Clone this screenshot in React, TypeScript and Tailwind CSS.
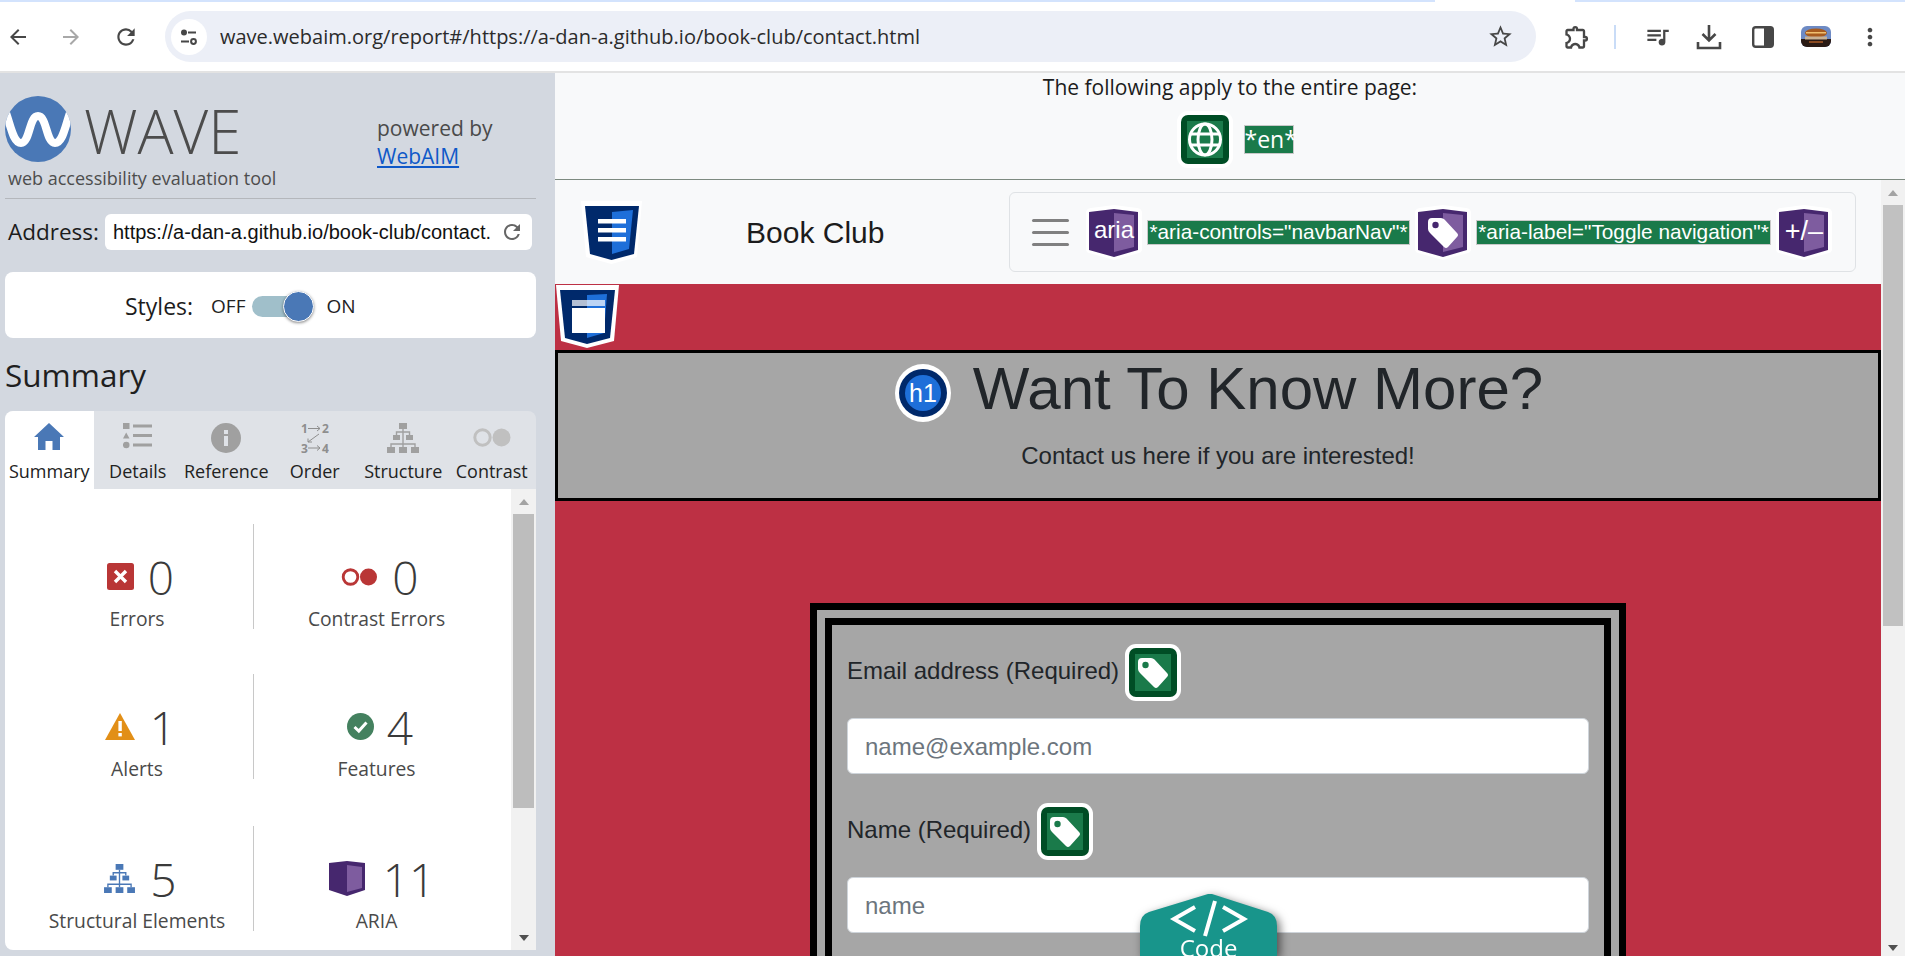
import React from "react";
import {
  MdArrowBack,
  MdArrowForward,
  MdRefresh,
  MdStarBorder,
  MdOutlineExtension,
  MdQueueMusic,
  MdMoreVert,
} from "react-icons/md";

const OPEN = "font-['Open_Sans',sans-serif]";

const TAG = "M13 18 Q13 14 17 14 L26 14 Q28 14 29.5 15.5 L42 29 Q44 31 42 33 L33 43 Q31 45 29 43 L15 29 Q13 27 13 25 Z";

function GreenBox({ kind }: { kind: "tag" | "globe" }) {
  return (
    <svg width="56" height="57" viewBox="0 0 56 57" className="shrink-0">
      <rect x="0" y="0" width="56" height="57" rx="11" fill="#fff" />
      <rect x="4" y="4" width="48" height="49" rx="7" fill="#004d25" />
      <rect x="10" y="10" width="36" height="37" fill="#1a7a4a" />
      {kind === "tag" ? (
        <>
          <path d={TAG} fill="#fff" />
          <circle cx="20.5" cy="21" r="3.2" fill="#1a7a4a" />
        </>
      ) : (
        <g fill="none" stroke="#fff" strokeWidth="3">
          <circle cx="28" cy="28.5" r="15.5" />
          <ellipse cx="28" cy="28.5" rx="7" ry="15.5" />
          <path d="M14 23 H42 M14 34 H42" />
        </g>
      )}
    </svg>
  );
}

function AriaIcon({ kind }: { kind: "aria" | "tag" | "pm" }) {
  return (
    <svg width="58" height="55" viewBox="0 0 58 55" className="shrink-0">
      <path d="M6 3 L29 0 L52 3 Q57 3.5 57 8 L57 44 Q57 47 54 48 L29 55 L4 48 Q1 47 1 44 L1 8 Q1 3.5 6 3 Z" fill="#fff" />
      <path d="M4 7 L29 4 L53 7 L53 45 L29 52 L4 45 Z" fill="#46276e" />
      <path d="M29 8 L49 10 L49 42 L29 47 Z" fill="#7e5c9f" />
      {kind === "tag" && (
        <>
          <path d={TAG} fill="#fff" transform="translate(1 -1)" />
          <circle cx="21.5" cy="20" r="3.2" fill="#46276e" />
        </>
      )}
      {kind === "aria" && (
        <text x="29" y="33" textAnchor="middle" fontSize="24" fill="#fff" fontFamily="'Liberation Sans',sans-serif">
          aria
        </text>
      )}
      {kind === "pm" && (
        <text x="29" y="35" textAnchor="middle" fontSize="27" fill="#fff" fontFamily="'Liberation Sans',sans-serif">
          +/–
        </text>
      )}
    </svg>
  );
}

function Tree({ color, w, h }: { color: string; w: number; h: number }) {
  return (
    <svg width={w} height={h} viewBox="0 0 32 30">
      <g fill={color}>
        <rect x="12" y="0" width="8" height="6" />
        <rect x="6" y="12" width="7" height="5" />
        <rect x="19" y="12" width="7" height="5" />
        <rect x="0" y="24" width="8" height="6" />
        <rect x="12" y="24" width="8" height="6" />
        <rect x="24" y="24" width="8" height="6" />
      </g>
      <path d="M16 6 V9 M9.5 12 V9 H22.5 V12 M16 9 V21 M4 24 V21 H28 V24 M16 21 V24" fill="none" stroke={color} strokeWidth="1.4" />
    </svg>
  );
}

function Dots({ color, w, h }: { color: string; w: number; h: number }) {
  return (
    <svg width={w} height={h} viewBox="0 0 38 19">
      <circle cx="9.5" cy="9.5" r="7.7" fill="none" stroke={color} strokeWidth="3" />
      <circle cx="28.5" cy="9.5" r="9" fill={color} />
    </svg>
  );
}

function TabIcon({ name }: { name: string }) {
  if (name === "Summary")
    return (
      <svg width="30" height="27" viewBox="0 0 30 27">
        <path d="M15 0 L30 14 L26 14 L26 27 L18.5 27 L18.5 18 L11.5 18 L11.5 27 L4 27 L4 14 L0 14 Z" fill="#4a78b6" />
      </svg>
    );
  if (name === "Details")
    return (
      <svg width="29" height="26" viewBox="0 0 29 26" fill="#a0a0a0">
        <rect x="0" y="0" width="6.5" height="6" />
        <rect x="10" y="1.5" width="19" height="3" />
        <path d="M3.2 9.5 L6.5 15.5 L0 15.5 Z" />
        <rect x="10" y="11" width="19" height="3" />
        <circle cx="3.2" cy="22" r="3.3" />
        <rect x="10" y="20.5" width="19" height="3" />
      </svg>
    );
  if (name === "Reference")
    return (
      <svg width="30" height="30" viewBox="0 0 30 30">
        <circle cx="15" cy="15" r="15" fill="#a0a0a0" />
        <rect x="13" y="13" width="4" height="10" fill="#dfe2e7" />
        <rect x="13" y="7" width="4" height="4" fill="#dfe2e7" />
      </svg>
    );
  if (name === "Order")
    return (
      <svg width="28" height="30" viewBox="0 0 28 30" fontFamily="'Open Sans',sans-serif" fontSize="12" fontWeight="700" fill="#8e8e8e">
        <text x="0" y="10">1</text>
        <text x="21" y="10">2</text>
        <text x="0" y="30">3</text>
        <text x="21" y="30">4</text>
        <path d="M7 5.5 H19 M16 3 L19 5.5 L16 8 M7 25 H19 M16 22.5 L19 25 L16 27.5 M18 11 L7 19 M7 15.5 V19 H11" fill="none" stroke="#8e8e8e" strokeWidth="1" />
      </svg>
    );
  if (name === "Structure") return <Tree color="#a0a0a0" w={32} h={30} />;
  return <Dots color="#c0c0c0" w={38} h={19} />;
}

const TABS = ["Summary", "Details", "Reference", "Order", "Structure", "Contrast"];

function Stat({
  icon,
  value,
  label,
  divider,
  gap,
}: {
  icon: React.ReactNode;
  value: string;
  label: string;
  divider?: boolean;
  gap: string;
}) {
  return (
    <div className={`h-[105px] flex flex-col items-center pt-[26px] ${divider ? "border-l border-[#c8c8c8]" : ""}`}>
      <div className={`h-[60px] flex items-center ml-[7px] ${gap}`}>
        {icon}
        <span className={`${OPEN} font-light text-[46px] leading-none text-[#3a3a3a]`}>{value}</span>
      </div>
      <div className={`${OPEN} text-[19.3px] leading-[20px] mt-[6px] text-[#4a4a4a] whitespace-nowrap`}>{label}</div>
    </div>
  );
}

function Sidebar() {
  return (
    <aside className={`w-[555px] shrink-0 h-full bg-[#d3d8e0] pl-[5px] pr-[19px] flex flex-col ${OPEN}`}>
      <div className="h-[126px] shrink-0 border-b border-[#b4b7bc] pt-[23px] flex">
        <div className="w-[372px] shrink-0">
          <div className="flex items-start h-[66px]">
            <svg width="66" height="66" viewBox="0 0 66 66" className="shrink-0">
              <defs>
                <clipPath id="wv">
                  <circle cx="33" cy="33" r="33" />
                </clipPath>
              </defs>
              <circle cx="33" cy="33" r="33" fill="#4a78b6" />
              <path
                d="M0 14 C6 30 8 47 16 47 C25 47 24 20 33 20 C42 20 41 47 50 47 C58 47 60 30 66 14"
                fill="none"
                stroke="#fff"
                strokeWidth="8"
                clipPath="url(#wv)"
              />
            </svg>
            <span className="ml-[13px] mt-[5px] text-[60px] leading-[60px] font-light text-[#4c4c4c]">WAVE</span>
          </div>
          <div className="ml-[3px] mt-[4px] text-[18px] leading-[24px] text-[#4d4d4d] whitespace-nowrap">
            web accessibility evaluation tool
          </div>
        </div>
        <div className="pt-[18px] text-[#4a4a4a] text-[21px] leading-[28px]">
          <div>powered by</div>
          <a href="#w" className="text-[#0f58c8] underline">
            WebAIM
          </a>
        </div>
      </div>

      <div className="mt-[15px] h-[36px] shrink-0 flex items-center">
        <span className="ml-[3px] text-[22.5px] text-[#1c1c1c] w-[97px]">Address:</span>
        <div className="w-[427px] h-[36px] bg-white rounded-md flex items-center pl-[8px] justify-between pr-[8px]">
          <span className="font-['Liberation_Sans',sans-serif] text-[20px] text-[#111] whitespace-nowrap overflow-hidden">
            https://a-dan-a.github.io/book-club/contact.
          </span>
          <MdRefresh size={24} color="#666" className="shrink-0" />
        </div>
      </div>

      <div className="mt-[22px] h-[66px] shrink-0 bg-white rounded-lg flex items-center pl-[120px] pt-[3px]">
        <span className="text-[23px] text-[#1c1c1c]">Styles:</span>
        <span className="ml-[18px] text-[19px] text-[#222]">OFF</span>
        <div className="relative ml-[7px] w-[47px] h-[21px] rounded-full bg-[#a0bfca]">
          <div className="absolute left-[31px] top-[-5px] w-[31px] h-[31px] rounded-full bg-[#4a78b6] border border-white shadow-[0_1px_3px_rgba(0,0,0,0.45)]" />
        </div>
        <span className="ml-[27px] text-[19px] text-[#222]">ON</span>
      </div>

      <h2 className="h-[73px] shrink-0 flex items-center pt-[1px] text-[31.5px] font-normal text-[#1f1f1f]">Summary</h2>

      <div className="h-[78px] shrink-0 rounded-t-lg bg-[#dfe2e7] grid grid-cols-6">
        {TABS.map((t, i) => (
          <div key={t} className={`relative flex flex-col items-center ${i === 0 ? "bg-white rounded-tl-lg" : ""}`}>
            <div className="h-[48px] pt-[12px] flex items-start justify-center">
              <div className={t === "Contrast" ? "mt-[5px]" : ""}>
                <TabIcon name={t} />
              </div>
            </div>
            <span className="text-[18px] leading-[24px] text-[#222] whitespace-nowrap">{t}</span>
          </div>
        ))}
      </div>

      <div className="h-[461px] shrink-0 bg-white rounded-bl-lg flex overflow-hidden">
        <div className="flex-1 pl-[16px] pr-[12px] pt-[35px]">
          <div className="grid grid-cols-[232px_246px]">
            <Stat
              gap="gap-[14px]"
              value="0"
              label="Errors"
              icon={
                <svg width="27" height="27" viewBox="0 0 27 27">
                  <rect width="27" height="27" rx="2.5" fill="#b93636" />
                  <path d="M8 8 L19 19 M19 8 L8 19" stroke="#fff" strokeWidth="3.4" />
                </svg>
              }
            />
            <Stat gap="gap-[14px]" divider value="0" label="Contrast Errors" icon={<Dots color="#b93636" w={37} h={18} />} />
          </div>
          <div className="grid grid-cols-[232px_246px] mt-[45px]">
            <Stat
              gap="gap-[15px]"
              value="1"
              label="Alerts"
              icon={
                <svg width="30" height="27" viewBox="0 0 30 27">
                  <path d="M15 0 L30 27 L0 27 Z" fill="#e28f17" />
                  <rect x="13.4" y="8" width="3.4" height="10" fill="#fff" />
                  <rect x="13.4" y="20" width="3.4" height="3.4" fill="#fff" />
                </svg>
              }
            />
            <Stat
              gap="gap-[13px]"
              divider
              value="4"
              label="Features"
              icon={
                <svg width="27" height="27" viewBox="0 0 27 27">
                  <circle cx="13.5" cy="13.5" r="13.5" fill="#44815f" />
                  <path d="M7.5 14 L11.8 18 L19.5 9.5" fill="none" stroke="#fff" strokeWidth="3" />
                </svg>
              }
            />
          </div>
          <div className="grid grid-cols-[232px_246px] mt-[47px]">
            <Stat gap="gap-[15px]" value="5" label="Structural Elements" icon={<Tree color="#4a78b6" w={31} h={29} />} />
            <Stat
              gap="gap-[18px]"
              divider
              value="11"
              label="ARIA"
              icon={
                <svg width="36" height="35" viewBox="0 0 36 35" className="ml-[4px]">
                  <path d="M0 2 L18 0 L36 2 L36 29 L18 35 L0 29 Z" fill="#46276e" />
                  <path d="M18 4 L33 6 L33 27 L18 31 Z" fill="#7e5c9f" />
                </svg>
              }
            />
          </div>
        </div>
        <div className="w-[25px] shrink-0 bg-[#f1f1f1] flex flex-col items-center">
          <div className="h-[25px] w-full flex items-center justify-center">
            <div className="w-0 h-0 border-x-[5px] border-x-transparent border-b-[6px] border-b-[#a3a3a3]" />
          </div>
          <div className="w-[21px] h-[294px] bg-[#bdbdbd]" />
          <div className="flex-1" />
          <div className="h-[25px] w-full flex items-center justify-center">
            <div className="w-0 h-0 border-x-[5px] border-x-transparent border-t-[6px] border-t-[#505050]" />
          </div>
        </div>
      </div>
    </aside>
  );
}

function GreenLabel({ children, w }: { children: string; w: string }) {
  return (
    <span
      className={`${w} h-[25px] shrink-0 bg-[#1a7a4a] border border-[#c8c8c8] text-white text-[20.8px] leading-[22px] text-center whitespace-nowrap overflow-hidden font-['Liberation_Sans',sans-serif]`}
    >
      {children}
    </span>
  );
}

function Field({ label, placeholder }: { label: string; placeholder: string }) {
  return (
    <div>
      <div className="h-[57px] flex items-center">
        <span className="text-[24px] text-[#212529] mr-[6px] pb-[4px]">{label}</span>
        <GreenBox kind="tag" />
      </div>
      <input
        readOnly
        placeholder={placeholder}
        className="mt-[17px] block w-[742px] h-[56px] bg-white border border-[#ced4da] rounded-md pl-[17px] pt-[2px] text-[24px] placeholder:text-[#6c757d] font-['Liberation_Sans',sans-serif]"
      />
    </div>
  );
}

function Page() {
  return (
    <div className="flex-1 min-h-0 flex">
      <div className="flex-1 min-w-0 flex flex-col font-['Liberation_Sans',sans-serif]">
        <nav className="h-[104px] shrink-0 bg-[#f8f9fa] flex items-center pl-[25px]">
          <svg width="63" height="63" viewBox="0 0 63 63" className="shrink-0">
            <path d="M1 0 H62 L57 56 L31.5 63 L6 56 Z" fill="#fff" />
            <path d="M5 5 H59 L54 53 L31.5 59 L10 53 Z" fill="#00296b" />
            <path d="M32 11 L53 9 L49 48 L32 53 Z" fill="#1e6fd9" />
            <rect x="18" y="18" width="28" height="4.5" fill="#fff" />
            <rect x="18" y="27" width="28" height="4.5" fill="#fff" />
            <rect x="18" y="36" width="28" height="4.5" fill="#fff" />
          </svg>
          <span className="ml-[103px] pt-[1px] text-[30px] text-[#1c1c1c] w-[263px] shrink-0">Book Club</span>
          <div className="w-[847px] h-[80px] shrink-0 border border-[#dfe2e5] rounded-md flex items-center pl-[22px]">
            <div className="w-[37px] shrink-0 flex flex-col gap-[9px]">
              <div className="h-[3px] bg-[#808080] rounded-sm" />
              <div className="h-[3px] bg-[#808080] rounded-sm" />
              <div className="h-[3px] bg-[#808080] rounded-sm" />
            </div>
            <div className="ml-[16px] flex items-center gap-[4px]">
              <AriaIcon kind="aria" />
              <GreenLabel w="w-[263px]">*aria-controls="navbarNav"*</GreenLabel>
              <AriaIcon kind="tag" />
              <GreenLabel w="w-[295px]">*aria-label="Toggle navigation"*</GreenLabel>
              <AriaIcon kind="pm" />
            </div>
          </div>
        </nav>
        <main className="flex-1 min-h-0 bg-[#bd3044] overflow-hidden">
          <div className="h-[66px] pt-[1px]">
            <svg width="65" height="63" viewBox="0 0 65 63">
              <path d="M1 0 H64 L59 56 L32 63 L6 56 Z" fill="#fff" />
              <path d="M5 5 H60 L55 53 L32 59 L10 53 Z" fill="#00296b" />
              <path d="M32 10 L52 9 L49 48 L32 53 Z" fill="#1e6fd9" />
              <rect x="17" y="15" width="33" height="6" fill="#fff" fillOpacity="0.7" />
              <rect x="17" y="23" width="33" height="25" fill="#fff" />
            </svg>
          </div>
          <section className="h-[151px] border-[3px] border-black bg-[#a6a6a6] flex flex-col items-center text-[#212529]">
            <div className="flex items-center mt-[11px] ml-[2px] h-[58px]">
              <svg width="56" height="58" viewBox="0 0 56 58" className="shrink-0">
                <ellipse cx="28" cy="29" rx="28" ry="29" fill="#fff" />
                <circle cx="28" cy="29" r="24" fill="#00296b" />
                <circle cx="28" cy="29" r="18" fill="#1e6fd9" />
                <text x="28" y="38" textAnchor="middle" fontSize="25" fill="#fff" fontFamily="'Liberation Sans',sans-serif">
                  h1
                </text>
              </svg>
              <h1 className="ml-[22px] mb-[9px] text-[60px] leading-none font-normal whitespace-nowrap">Want To Know More?</h1>
            </div>
            <p className="mt-[21px] text-[24px] leading-[26px]">Contact us here if you are interested!</p>
          </section>
          <div className="mt-[102px] mx-auto w-[816px] border-[7px] border-black p-[8px] bg-[#a6a6a6]">
            <form className="border-[7px] border-black pt-[19px] px-[15px] flex flex-col gap-[29px] h-[600px]">
              <Field label="Email address (Required)" placeholder="name@example.com" />
              <Field label="Name (Required)" placeholder="name" />
            </form>
          </div>
        </main>
      </div>
      <div className="w-[24px] shrink-0 bg-[#f1f1f1] flex flex-col items-center">
        <div className="h-[25px] w-full flex items-center justify-center">
          <div className="w-0 h-0 border-x-[5px] border-x-transparent border-b-[6px] border-b-[#a3a3a3]" />
        </div>
        <div className="w-[20px] h-[421px] bg-[#c1c1c1]" />
        <div className="flex-1" />
        <div className="h-[16px] w-full flex items-center justify-center">
          <div className="w-0 h-0 border-x-[5px] border-x-transparent border-t-[6px] border-t-[#505050]" />
        </div>
      </div>
    </div>
  );
}

function CodeTab() {
  return (
    <div className="absolute left-[1140px] top-[821px] w-[137px] h-[62px] drop-shadow-[3px_3px_5px_rgba(0,0,0,0.55)]">
      <svg width="137" height="62" viewBox="0 0 137 62" className="block">
        <path d="M68 0 L72 0 L128 18 Q137 21 137 32 L137 62 L0 62 L0 32 Q0 21 9 18 Z" fill="#18958b" />
        <path d="M55 13 L34 25 L55 37 M83 13 L104 25 L83 37 M75 7 L65 42" fill="none" stroke="#fff" strokeWidth="4" />
      </svg>
      <span className={`${OPEN} absolute left-0 right-0 top-[39px] text-center text-white text-[24px] leading-[30px]`}>Code</span>
    </div>
  );
}

export default function App() {
  return (
    <div className="w-[1905px] h-[956px] overflow-hidden flex flex-col bg-white font-['Liberation_Sans',sans-serif]">
      <div className="h-[2px] shrink-0 flex">
        <div className="w-[1435px] bg-[#d3e3fd]" />
        <div className="w-[140px] bg-white" />
        <div className="flex-1 bg-[#d3e3fd]" />
      </div>
      <header className="h-[71px] shrink-0 bg-white border-b-2 border-[#e3e3e3] flex items-center text-[#474747]">
        <MdArrowBack size={24} className="ml-[6px]" />
        <MdArrowForward size={24} color="#a8a8a8" className="ml-[29px]" />
        <MdRefresh size={26} className="ml-[30px]" />
        <div className="ml-[26px] w-[1371px] h-[51px] rounded-full bg-[#eceff7] flex items-center pl-[6px]">
          <div className="w-[36px] h-[36px] rounded-full bg-white flex items-center justify-center">
            <svg width="18" height="18" viewBox="0 0 18 18" fill="none" stroke="#474747" strokeWidth="2">
              <circle cx="4" cy="4.5" r="2" fill="#474747" />
              <path d="M8 4.5 H16 M1 13.5 H9" />
              <circle cx="13.5" cy="13.5" r="2.4" />
            </svg>
          </div>
          <span className={`${OPEN} ml-[13px] text-[20px] text-[#2b2b2b] whitespace-nowrap`}>
            wave.webaim.org/report#/https://a-dan-a.github.io/book-club/contact.html
          </span>
          <MdStarBorder size={27} className="ml-auto mr-[22px]" />
        </div>
        <MdOutlineExtension size={28} className="ml-[27px]" />
        <div className="ml-[23px] w-[2px] h-[24px] bg-[#c9dcf7]" />
        <MdQueueMusic size={27} className="ml-[28px]" />
        <svg width="26" height="26" viewBox="0 0 26 26" className="ml-[25px]" fill="none" stroke="#474747" strokeWidth="2.6">
          <path d="M13 1 V16 M6.5 10 L13 16.5 L19.5 10 M2 18 V24 H24 V18" />
        </svg>
        <svg width="22" height="22" viewBox="0 0 22 22" className="ml-[30px]">
          <rect x="1.2" y="1.2" width="19.6" height="19.6" rx="2.5" fill="none" stroke="#474747" strokeWidth="2.4" />
          <rect x="12" y="1" width="9" height="20" fill="#474747" />
        </svg>
        <div className="ml-[27px] w-[30px] h-[21px] rounded-md overflow-hidden">
          <svg width="30" height="21" viewBox="0 0 30 21">
            <rect width="30" height="21" fill="#6d8ac4" />
            <rect y="13" width="30" height="8" fill="#2a1a14" />
            <ellipse cx="15" cy="7" rx="11" ry="4.5" fill="#a85b1e" />
            <rect x="5" y="6" width="20" height="1.5" fill="#f0c070" />
            <rect x="4" y="10.5" width="22" height="3" fill="#c9b294" />
            <rect x="8" y="15" width="14" height="2" fill="#8a4a20" />
          </svg>
        </div>
        <MdMoreVert size={28} className="ml-[25px]" />
      </header>
      <div className="relative flex-1 min-h-0 flex">
        <Sidebar />
        <div className="flex-1 min-w-0 flex flex-col">
          <div className={`h-[107px] shrink-0 bg-[#f8f9fa] border-b border-[#7d8a80] flex flex-col items-center ${OPEN}`}>
            <div className="h-[28px] text-[21px] leading-[28px] text-[#1c1c1c]">The following apply to the entire page:</div>
            <div className="mt-[10px] ml-[10px] flex items-center">
              <GreenBox kind="globe" />
              <span className="ml-[11px] w-[50px] h-[29px] bg-[#1a7a4a] border border-[#c8c8c8] text-white text-[23px] leading-[26px] text-center whitespace-nowrap">
                *en*
              </span>
            </div>
          </div>
          <Page />
        </div>
        <CodeTab />
      </div>
    </div>
  );
}
